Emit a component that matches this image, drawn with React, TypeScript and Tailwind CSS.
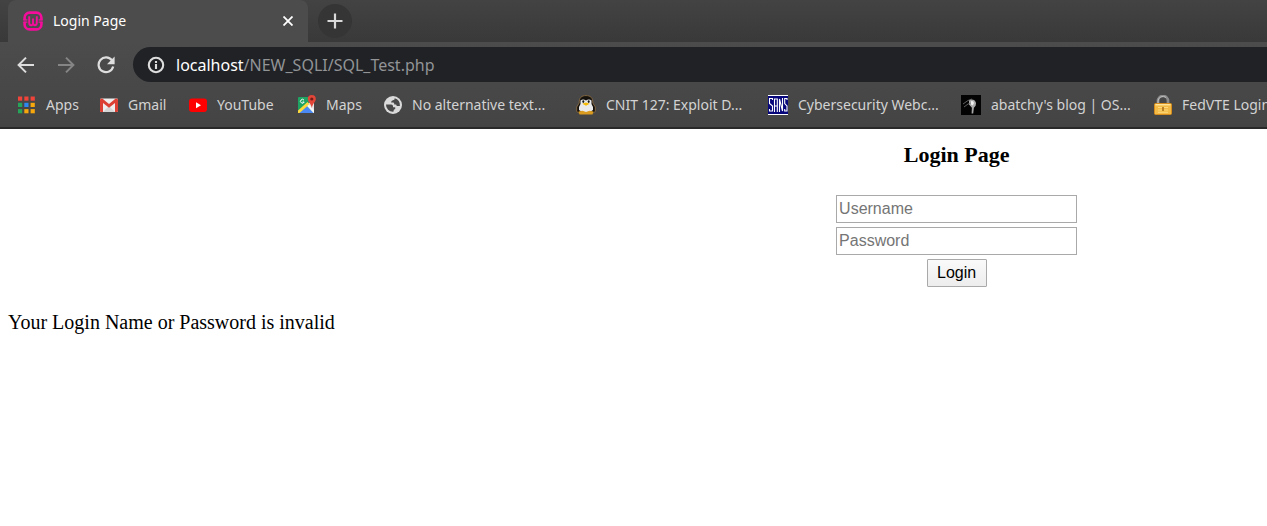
import type { ReactNode } from "react";

function BackIcon() {
  return (
    <svg width="18" height="18" viewBox="0 0 18 18" fill="none" stroke="currentColor" strokeWidth="2" aria-hidden="true">
      <path d="M17 9H2M9 1.6 1.6 9 9 16.4" />
    </svg>
  );
}

function ForwardIcon() {
  return (
    <svg width="18" height="18" viewBox="0 0 18 18" fill="none" stroke="currentColor" strokeWidth="2" aria-hidden="true">
      <path d="M1 9h15M9 1.6 16.4 9 9 16.4" />
    </svg>
  );
}

function ReloadIcon() {
  return (
    <svg width="18" height="18" viewBox="0 0 18 18" fill="none" aria-hidden="true">
      <path d="M15 4.4A7.4 7.4 0 1 0 16.2 10.6" stroke="currentColor" strokeWidth="2.2" />
      <path d="M17.6 0.6v7.6H10z" fill="currentColor" />
    </svg>
  );
}

function InfoIcon() {
  return (
    <svg width="18" height="18" viewBox="0 0 18 18" fill="none" stroke="currentColor" strokeWidth="2.1" aria-hidden="true">
      <circle cx="9" cy="9" r="7.2" />
      <path d="M9 8v5M9 5v2" />
    </svg>
  );
}

function WampIcon() {
  return (
    <svg width="20" height="20" viewBox="0 0 20 20" fill="none" stroke="#f40d9b" aria-hidden="true">
      <path d="M1.6 9.2V6.6a5 5 0 0 1 5-5h6.8a5 5 0 0 1 5 5v2.6M1.6 10.8v2.6a5 5 0 0 0 5 5h6.8a5 5 0 0 0 5-5v-2.6" strokeWidth="2.6" />
      <path d="M.4 8.8h4M15.6 8.8h4M.4 11.2h4M15.6 11.2h4" strokeWidth="1.2" />
      <path d="M6.2 5.2v6.6q0 2.4 1.9 2.4T10 11.8V7.5M10 11.8q0 2.4 1.9 2.4t1.9-2.4V5.2" strokeWidth="1.9" />
    </svg>
  );
}

function AppsIcon() {
  const colors = ["#f0443a", "#f0443a", "#f0443a", "#26a45a", "#2c87f0", "#f5a70c", "#26a45a", "#f5a70c", "#f5a70c"];
  return (
    <svg width="18" height="18" viewBox="0 0 18 18" aria-hidden="true">
      {colors.map((color, i) => (
        <rect key={i} x={(i % 3) * 6.3} y={Math.floor(i / 3) * 6.3 + 0.5} width="4.2" height="4.2" fill={color} />
      ))}
    </svg>
  );
}

function GmailIcon() {
  return (
    <svg width="18" height="18" viewBox="0 0 18 18" aria-hidden="true">
      <rect y="2.5" width="18" height="13.5" rx="1.2" fill="#eeeeee" />
      <path d="m3 16 6-6 6 6z" fill="#d5d5d5" />
      <path d="M0 4v11q0 1 1 1h2V7l6 4.8L15 7v9h2q1 0 1-1V4q0-1.5-1.5-1.5h-.8L9 8 2.3 2.5h-.8Q0 2.5 0 4z" fill="#dc3f34" />
    </svg>
  );
}

function YouTubeIcon() {
  return (
    <svg width="18" height="18" viewBox="0 0 18 18" aria-hidden="true">
      <rect y="2.5" width="18" height="13.5" rx="3" fill="#ff0000" />
      <path d="m7 6.3 5 3-5 3z" fill="#fff" />
    </svg>
  );
}

function MapsIcon() {
  return (
    <svg width="18" height="20" viewBox="0 0 18 20" aria-hidden="true">
      <rect y="2" width="16" height="16" rx="1" fill="#1ea362" />
      <path d="m9 9 7 7V6z" fill="#e4e4e4" />
      <path d="m1 18 8-7 7 7z" fill="#4a89f3" />
      <path d="M0 15.5 9.5 7l2 2.2L1.5 18H0z" fill="#ffd93b" />
      <path d="m9 11 6.5 7h.5v-3l-5-5.5z" fill="#f6f6f6" />
      <path d="M6 5.2A1.9 1.9 0 1 0 6.2 7H4.5" stroke="#fff" strokeWidth="1" fill="none" />
      <path d="M13.8 0a4 4 0 0 0-4 4c0 3.2 3.1 4 4 9 1-5 4-5.8 4-9a4 4 0 0 0-4-4z" fill="#e14639" />
      <circle cx="13.8" cy="4" r="1.6" fill="#741c18" />
    </svg>
  );
}

function GlobeIcon() {
  return (
    <svg width="18" height="18" viewBox="0 0 18 18" aria-hidden="true">
      <circle cx="9" cy="9" r="9" fill="#dadada" />
      <path d="M2 8.5h5.3q1.7.1 1.7 1.8v1h2.2v1.6q-1.8.2-1.8 2.9A7 7 0 0 1 2 8.5zM10.7 2.2q.2 1.8-1.8 2-1.8.2-1.8 2.3h2.2q1 .2 1 2h1.2q1.2 0 1.2 1.4h3.2a7 7 0 0 0-5.2-7.7z" fill="#484848" />
    </svg>
  );
}

function PenguinIcon() {
  return (
    <svg width="20" height="20" viewBox="0 0 20 20" aria-hidden="true">
      <path d="M3.2 8C3 2.8 5.5.6 10 .6S17 2.8 16.8 8l2.5 4v4.5L17 18H3L.7 16.5V12z" fill="#15110d" stroke="#957346" strokeWidth=".8" />
      <path d="M4.5 5.5q2.5-2 5.5 0 3-2 5.5 0V9l1.5 3v3l-3 2H6l-3-2v-3l1.5-3z" fill="#e9e9e9" />
      <ellipse cx="7.3" cy="6.6" rx="1" ry="1.3" fill="#171717" />
      <ellipse cx="12.7" cy="6.6" rx="1" ry="1.3" fill="#171717" />
      <path d="m6.3 8.8 3.7-1.4 3.7 1.4-3.7 1.9z" fill="#f5b900" />
      <path d="m2.5 16.4 4-.6 3.5 1.2 3.5-1.2 4 .6-1 3h-13z" fill="#d99b20" />
    </svg>
  );
}

function SansIcon() {
  return (
    <svg width="20" height="20" viewBox="0 0 20 20" aria-hidden="true">
      <rect width="20" height="20" fill="#07077b" />
      <path d="M0 .5h20M0 19.5h20" stroke="#fff" />
      <path d="M4.5 5V3.5h-3v5l3 2.5v5h-3V14M6.5 17V4h2.8v13M6.5 11h2.8M11.5 17V4l3 12V3M19 5V3.5h-2.3v5L19 11v5h-2.3V14" stroke="#fff" strokeWidth="1.1" fill="none" />
    </svg>
  );
}

function BlogIcon() {
  return (
    <svg width="20" height="20" viewBox="0 0 20 20" aria-hidden="true">
      <rect width="20" height="20" fill="#030303" />
      <path d="M8 5.2q3-1.8 6 .5 1.8 2 .6 5l-1.7 2-.7 5.8h-1.6l.3-5.8L8 9.5z" fill="#a9a9a9" />
      <path d="m2 9 5-3.5 4-1.5M3 12l4-3 3-1" stroke="#777" strokeWidth=".8" fill="none" />
      <path d="M10 6.2q2.6-.7 3 1.8l-1.2 2.4-1.8-1z" fill="#eee" />
    </svg>
  );
}

function LockIcon() {
  return (
    <svg width="18" height="20" viewBox="0 0 18 20" aria-hidden="true">
      <path d="M4 10V6a5 5 0 0 1 10 0v4" stroke="#8c8c8c" strokeWidth="2.7" fill="none" />
      <path d="M4 9V6a5 5 0 0 1 8-3.6" stroke="#bdbdbd" strokeWidth="1" fill="none" />
      <rect x=".5" y="8.5" width="17" height="11" rx="1" fill="#f3bb45" stroke="#d68c1c" />
      <path d="M1.5 9.7h15" stroke="#ffe49a" strokeWidth="1.4" />
      <path d="M4 12.5h10M4 15h10M4 17.3h10" stroke="#ffe08a" strokeWidth=".8" />
      <path d="M9 12v4" stroke="#b57a22" strokeWidth="1.8" />
    </svg>
  );
}

type Bookmark = { label: string; icon: ReactNode; width: string };

const bookmarks: Bookmark[] = [
  { label: "Apps", icon: <AppsIcon />, width: "w-[82px]" },
  { label: "Gmail", icon: <GmailIcon />, width: "w-[89px]" },
  { label: "YouTube", icon: <YouTubeIcon />, width: "w-[109px]" },
  { label: "Maps", icon: <MapsIcon />, width: "w-[86px]" },
  { label: "No alternative text...", icon: <GlobeIcon />, width: "w-48" },
  { label: "CNIT 127: Exploit D...", icon: <PenguinIcon />, width: "w-48" },
  { label: "Cybersecurity Webc...", icon: <SansIcon />, width: "w-[193px]" },
  { label: "abatchy's blog | OS...", icon: <BlogIcon />, width: "w-[193px]" },
  { label: "FedVTE Login", icon: <LockIcon />, width: "w-[193px]" },
];

function TabStrip() {
  return (
    <div className="flex h-[42px] bg-linear-to-b from-[#434343] to-[#393939] pl-2">
      <div className="flex w-[300px] items-center rounded-t-lg bg-[#4c4c4c] pr-3 pl-[15px]">
        <WampIcon />
        <span className="ml-[10px] flex-1 text-sm text-white">Login Page</span>
        <button type="button" aria-label="Close tab" className="flex size-4 items-center justify-center text-white">
          <svg width="10" height="10" viewBox="0 0 10 10" stroke="currentColor" strokeWidth="1.8" aria-hidden="true">
            <path d="m.5.5 9 9M9.5.5l-9 9" />
          </svg>
        </button>
      </div>
      <button type="button" aria-label="New tab" className="mt-1 ml-[10px] flex size-[34px] items-center justify-center rounded-full bg-[#353535] text-[#d9d9d9]">
        <svg width="16" height="16" viewBox="0 0 16 16" stroke="currentColor" strokeWidth="2.2" aria-hidden="true">
          <path d="M8 .5v15M.5 8h15" />
        </svg>
      </button>
    </div>
  );
}

function Toolbar() {
  return (
    <div className="flex items-center pt-[5px] pl-[17px]">
      <button type="button" aria-label="Back" className="mr-[22px] text-[#dedede]"><BackIcon /></button>
      <button type="button" aria-label="Forward" className="mr-[22px] text-[#858585]"><ForwardIcon /></button>
      <button type="button" aria-label="Reload" className="mr-[18px] text-[#dedede]"><ReloadIcon /></button>
      <div className="flex h-[35px] flex-1 items-center rounded-l-full bg-[#202226] pl-[14px] text-[#dedede]">
        <InfoIcon />
        <span className="ml-[11px] text-base whitespace-nowrap text-[#929496]">
          <span className="text-white">localhost</span>/NEW_SQLI/SQL_Test.php
        </span>
      </div>
    </div>
  );
}

function BookmarksBar() {
  return (
    <nav aria-label="Bookmarks" className="flex h-[45px] overflow-hidden pl-[18px]">
      {bookmarks.map((bookmark) => (
        <a key={bookmark.label} href="#" className={`flex shrink-0 items-center gap-[10px] text-sm whitespace-nowrap text-[#d3d3d3] ${bookmark.width}`}>
          <span className="shrink-0">{bookmark.icon}</span>
          {bookmark.label}
        </a>
      ))}
    </nav>
  );
}

export default function App() {
  return (
    <div className="min-h-screen overflow-hidden bg-white">
      <header className="border-b-2 border-[#292929] font-['Noto_Sans',sans-serif]">
        <TabStrip />
        <div className="bg-linear-to-b from-[#4c4c4c] to-[#444444]">
          <Toolbar />
          <BookmarksBar />
        </div>
      </header>
      <main className="w-[151%] px-2 pt-3 font-['Liberation_Serif',serif] text-black">
        <h1 className="text-center text-[22px] leading-7 font-bold">Login Page</h1>
        <form className="mt-[26px] flex flex-col items-center gap-1 font-['Liberation_Sans',sans-serif] text-base" onSubmit={(event) => event.preventDefault()}>
          <input type="text" aria-label="Username" placeholder="Username" className="h-7 w-[241px] border border-[#a9a9a9] px-[2px] placeholder:text-[#757575]" />
          <input type="password" aria-label="Password" placeholder="Password" className="h-7 w-[241px] border border-[#a9a9a9] px-[2px] placeholder:text-[#757575]" />
          <button type="submit" className="h-7 w-[60px] rounded-[1px] border border-[#a9a9a9] bg-linear-to-b from-[#fafafa] to-[#ededed]">Login</button>
        </form>
        <p className="mt-[23px] text-[20px] leading-6">Your Login Name or Password is invalid</p>
      </main>
    </div>
  );
}
